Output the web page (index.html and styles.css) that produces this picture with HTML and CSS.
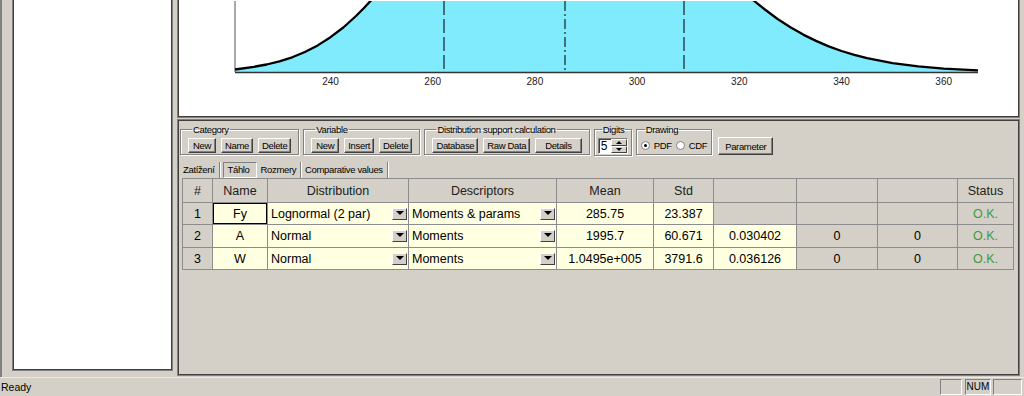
FILE: index.html
```html
<!DOCTYPE html>
<html lang="cs">

<head>
  <meta charset="UTF-8" />
  <title>Proměnné</title>
  <link rel="stylesheet" href="styles.css">
</head>

<body>
  <div class="window">
    <div class="workspace">
      <div class="sidebar">
        <div class="tree"></div>
      </div>

      <div class="content">
        <div class="chart">
          <svg class="plot" width="839" height="116" viewBox="179 0 839 116">
            <path class="area" d="M235,71 L235,68.5 L253.9,65.8 L266.6,63.5 L279.4,60.4 L292.2,56.3 L304.9,51 L317.7,44.4 L330.5,36.2 L343.3,26.5 L356,15 L363.7,7.3 L371.4,-1 L749.5,-4 L757.2,2.4 L764.9,8.5 L777.6,18 L790.4,26.3 L803.2,33.6 L816,39.9 L828.7,45.4 L841.5,50 L854.3,53.9 L867,57.2 L892.6,62.1 L918.2,65.4 L943.7,67.6 L978,69.4 L978,71 Z" />
            <line class="sd" x1="444" y1="0" x2="444" y2="71" />
            <line class="mean" x1="565" y1="0" x2="565" y2="71" />
            <line class="sd" x1="684" y1="0" x2="684" y2="71" />
            <line class="axis" x1="235" y1="0" x2="235" y2="71" />
            <line class="axis axis-x" x1="235" y1="71.5" x2="978" y2="71.5" />
            <path class="curve" d="M235,68.5 L253.9,65.8 L266.6,63.5 L279.4,60.4 L292.2,56.3 L304.9,51 L317.7,44.4 L330.5,36.2 L343.3,26.5 L356,15 L363.7,7.3 L371.4,-1" />
            <path class="curve" d="M749.5,-4 L757.2,2.4 L764.9,8.5 L777.6,18 L790.4,26.3 L803.2,33.6 L816,39.9 L828.7,45.4 L841.5,50 L854.3,53.9 L867,57.2 L892.6,62.1 L918.2,65.4 L943.7,67.6 L978,69.4" />
            <g class="ticks">
              <text x="330.5" y="84">240</text>
              <text x="432.7" y="84">260</text>
              <text x="534.9" y="84">280</text>
              <text x="637.1" y="84">300</text>
              <text x="739.3" y="84">320</text>
              <text x="841.5" y="84">340</text>
              <text x="943.7" y="84">360</text>
            </g>
          </svg>
        </div>

        <div class="lower">
          <div class="toolbar">
            <fieldset class="group">
              <legend>Category</legend>
              <button class="btn">New</button>
              <button class="btn">Name</button>
              <button class="btn">Delete</button>
            </fieldset>
            <fieldset class="group">
              <legend>Variable</legend>
              <button class="btn">New</button>
              <button class="btn">Insert</button>
              <button class="btn">Delete</button>
            </fieldset>
            <fieldset class="group">
              <legend>Distribution support calculation</legend>
              <button class="btn">Database</button>
              <button class="btn">Raw Data</button>
              <button class="btn btn-wide">Details</button>
            </fieldset>
            <fieldset class="group group-tight">
              <legend>Digits</legend>
              <div class="spin">
                <span class="spin-value">5</span>
                <span class="spin-arrows">
                  <span class="arrow up"></span>
                  <span class="arrow down"></span>
                </span>
              </div>
            </fieldset>
            <fieldset class="group group-radio">
              <legend>Drawing</legend>
              <label class="radio"><span class="dot checked"></span>PDF</label>
              <label class="radio"><span class="dot"></span>CDF</label>
            </fieldset>
            <button class="btn btn-param">Parameter</button>
          </div>

          <div class="tabs">
            <span class="tab">Zatížení</span>
            <span class="tab active">Táhlo</span>
            <span class="tab">Rozmery</span>
            <span class="tab">Comparative values</span>
          </div>

          <div class="grid-wrap">
            <table class="grid">
              <colgroup>
                <col style="width: 30px">
                <col style="width: 55px">
                <col style="width: 141px">
                <col style="width: 148px">
                <col style="width: 97px">
                <col style="width: 60px">
                <col style="width: 83px">
                <col style="width: 81px">
                <col style="width: 80px">
                <col style="width: 56px">
              </colgroup>
              <thead>
                <tr>
                  <th>#</th>
                  <th>Name</th>
                  <th>Distribution</th>
                  <th>Descriptors</th>
                  <th>Mean</th>
                  <th>Std</th>
                  <th></th>
                  <th></th>
                  <th></th>
                  <th>Status</th>
                </tr>
              </thead>
              <tbody>
                <tr>
                  <td class="off">1</td>
                  <td class="in focus">Fy</td>
                  <td class="in pick"><div class="select">Lognormal (2 par)<span class="drop"></span></div></td>
                  <td class="in pick"><div class="select">Moments &amp; params<span class="drop"></span></div></td>
                  <td class="in">285.75</td>
                  <td class="in">23.387</td>
                  <td class="off"></td>
                  <td class="off"></td>
                  <td class="off"></td>
                  <td class="off ok">O.K.</td>
                </tr>
                <tr class="tall">
                  <td class="off">2</td>
                  <td class="in">A</td>
                  <td class="in pick"><div class="select">Normal<span class="drop"></span></div></td>
                  <td class="in pick"><div class="select">Moments<span class="drop"></span></div></td>
                  <td class="in">1995.7</td>
                  <td class="in">60.671</td>
                  <td class="in">0.030402</td>
                  <td class="off">0</td>
                  <td class="off">0</td>
                  <td class="off ok">O.K.</td>
                </tr>
                <tr>
                  <td class="off">3</td>
                  <td class="in">W</td>
                  <td class="in pick"><div class="select">Normal<span class="drop"></span></div></td>
                  <td class="in pick"><div class="select">Moments<span class="drop"></span></div></td>
                  <td class="in">1.0495e+005</td>
                  <td class="in">3791.6</td>
                  <td class="in">0.036126</td>
                  <td class="off">0</td>
                  <td class="off">0</td>
                  <td class="off ok">O.K.</td>
                </tr>
              </tbody>
            </table>
          </div>
        </div>
      </div>
    </div>

    <div class="statusbar">
      <span>Ready</span>
      <div class="panes">
        <span class="pane p1"></span>
        <span class="pane p2">NUM</span>
        <span class="pane p3"></span>
      </div>
    </div>
  </div>
</body>

</html>
```

FILE: styles.css
```css
body {
  margin: 0;
  background: #d4d0c8;
  font-family: "Liberation Sans", Arial, sans-serif;
  color: #000;
  overflow: hidden;
}

.window {
  display: flex;
  flex-direction: column;
  width: 1024px;
  height: 396px;
}

.workspace {
  display: flex;
  height: 377px;
  border-left: 2px solid #808080;
  box-sizing: border-box;
}

/* left tree pane */
.sidebar {
  width: 175px;
  padding: 0 4px 6px 10px;
  box-sizing: border-box;
  flex: none;
}

.tree {
  height: calc(100% + 2px);
  margin-top: -2px;
  background: white;
  border: 1px solid #808080;
  box-shadow: inset 1px 1px 0 #404040, inset -1px -1px 0 #404040;
  box-sizing: border-box;
}

.content {
  flex: 1;
  display: flex;
  flex-direction: column;
  padding-right: 4px;
  min-width: 0;
}

/* chart */
.chart {
  height: 120px;
  margin-top: -2px;
  background: white;
  border: 1px solid #808080;
  box-shadow: inset 1px 1px 0 #404040, inset -1px -1px 0 #404040;
  box-sizing: border-box;
  padding: 2px 0 0 1px;
  overflow: hidden;
  flex: none;
}

.plot {
  display: block;
}

.area {
  fill: #80ebfd;
}

.curve {
  fill: none;
  stroke: #000;
  stroke-width: 2.3;
  stroke-linejoin: round;
}

.sd {
  stroke: #1b3238;
  stroke-width: 1.3;
  stroke-dasharray: 14 4;
}

.mean {
  stroke: #1b3238;
  stroke-width: 1.3;
  stroke-dasharray: 10 3 2 3;
}

.axis {
  stroke: #555;
  stroke-width: 1;
}

.axis-x {
  stroke: #333;
  stroke-width: 1.6;
}

.ticks text {
  font-family: "Liberation Sans", Arial, sans-serif;
  font-size: 10px;
  fill: #222;
  text-anchor: middle;
}

/* lower pane */
.lower {
  flex: 1;
  margin: 1px 0 1px 0;
  border: 1px solid #808080;
  box-shadow: inset 1px 1px 0 #404040, inset -1px -1px 0 #404040;
  padding: 1px;
  display: flex;
  flex-direction: column;
  font-size: 9.5px;
  letter-spacing: -0.35px;
}

.toolbar {
  display: flex;
  align-items: flex-start;
  gap: 4px;
  padding: 3px 0 0 1px;
}

.group {
  display: flex;
  align-items: flex-start;
  gap: 5px;
  margin: 0;
  padding: 3px 7px 1px;
  border: 1px solid #808080;
  box-shadow: inset 1px 1px 0 #fff, 1px 1px 0 #fff;
  min-width: 0;
}

.group-tight {
  padding: 3px 3px 1px;
}

.group-radio {
  padding: 3px 4px 1px;
  gap: 4px;
}

.group legend {
  line-height: 11px;
  padding: 0 1px;
  margin-left: 4px;
}

.btn {
  font-family: inherit;
  font-size: 9.5px;
  letter-spacing: -0.35px;
  line-height: 13px;
  height: 15px;
  min-width: 28px;
  padding: 0 3px;
  background: #d4d0c8;
  color: #000;
  border: 1px solid;
  border-color: #fff #404040 #404040 #fff;
  box-shadow: inset -1px -1px 0 #808080;
}

.btn-wide {
  padding: 0 9px;
}

.btn-param {
  height: 18px;
  margin: 13px 0 0 2px;
  padding: 0 6px;
}

.spin {
  display: flex;
  width: 30px;
  height: 16px;
  border: 1px solid;
  border-color: #808080 #fff #fff #808080;
  box-shadow: inset 1px 1px 0 #404040;
  background: white;
  box-sizing: border-box;
}

.spin-value {
  flex: 1;
  font-size: 12px;
  letter-spacing: 0;
  line-height: 14px;
  padding-left: 2px;
}

.spin-arrows {
  display: flex;
  flex-direction: column;
  width: 16px;
  background: #d4d0c8;
}

.arrow {
  flex: 1;
  display: flex;
  align-items: center;
  justify-content: center;
  border: 1px solid;
  border-color: #fff #404040 #404040 #fff;
}

.arrow::after {
  content: "";
  border-left: 3px solid transparent;
  border-right: 3px solid transparent;
}

.up::after {
  border-bottom: 3px solid #000;
}

.down::after {
  border-top: 3px solid #000;
}

.radio {
  display: flex;
  align-items: center;
  gap: 4px;
  margin: 2px 0;
}

.dot {
  width: 9px;
  height: 9px;
  border-radius: 50%;
  background: white;
  border: 1px solid #808080;
  box-sizing: border-box;
  display: flex;
  align-items: center;
  justify-content: center;
}

.dot.checked::after {
  content: "";
  width: 3px;
  height: 3px;
  border-radius: 50%;
  background: #000;
}

/* tabs */
.tabs {
  display: flex;
  margin: 6px 0 0 3px;
  height: 16px;
}

.tab {
  padding: 0 4px 0 1px;
  line-height: 15px;
  border-right: 1px solid #808080;
  box-shadow: 1px 0 0 #fff;
  margin-right: 3px;
}

.tab.active {
  border: 1px solid;
  border-color: #808080 #fff #fff #808080;
  box-shadow: none;
  padding: 0 6px 0 4px;
  line-height: 13px;
}

/* grid */
.grid-wrap {
  padding: 0 0 0 3px;
}

.grid {
  border-collapse: collapse;
  table-layout: fixed;
  width: 831px;
  font-size: 12.5px;
  letter-spacing: 0;
}

.grid th,
.grid td {
  border: 1px solid #8c8c8c;
  padding: 0 3px;
  text-align: center;
  white-space: nowrap;
  overflow: hidden;
}

.grid th {
  background: #d4d0c8;
  font-weight: normal;
  height: 23px;
  color: #202020;
}

.grid td {
  height: 21px;
}

.grid tr.tall td {
  height: 22px;
}

.grid td.in {
  background: #ffffe1;
}

.grid td.off {
  background: #d4d0c8;
}

.grid td.focus {
  box-shadow: inset 0 0 0 1px #000;
}

.grid td.pick {
  padding: 0 1px 0 3px;
  text-align: left;
}

.grid td.ok {
  color: #3d9a3d;
}

.select {
  display: flex;
  justify-content: space-between;
  align-items: center;
}

.drop {
  width: 15px;
  height: 12px;
  box-sizing: border-box;
  background: #d4d0c8;
  border: 1px solid;
  border-color: #fff #404040 #404040 #fff;
  display: flex;
  justify-content: center;
  padding-top: 2px;
}

.drop::after {
  content: "";
  border-left: 4px solid transparent;
  border-right: 4px solid transparent;
  border-top: 4px solid #000;
}

/* status bar */
.statusbar {
  height: 19px;
  display: flex;
  align-items: center;
  padding-left: 1px;
  font-size: 10.5px;
  border-top: 1px solid #ece9e2;
  box-sizing: border-box;
}

.panes {
  display: flex;
  margin-left: auto;
  gap: 2px;
  padding-right: 2px;
}

.pane {
  height: 16px;
  border: 1px solid;
  border-color: #808080 #fff #fff #808080;
  box-sizing: border-box;
  font-size: 10px;
  line-height: 14px;
  text-align: center;
}

.p1 {
  width: 22px;
  margin-right: 1px;
}

.p2 {
  width: 26px;
}

.p3 {
  width: 29px;
}
```
